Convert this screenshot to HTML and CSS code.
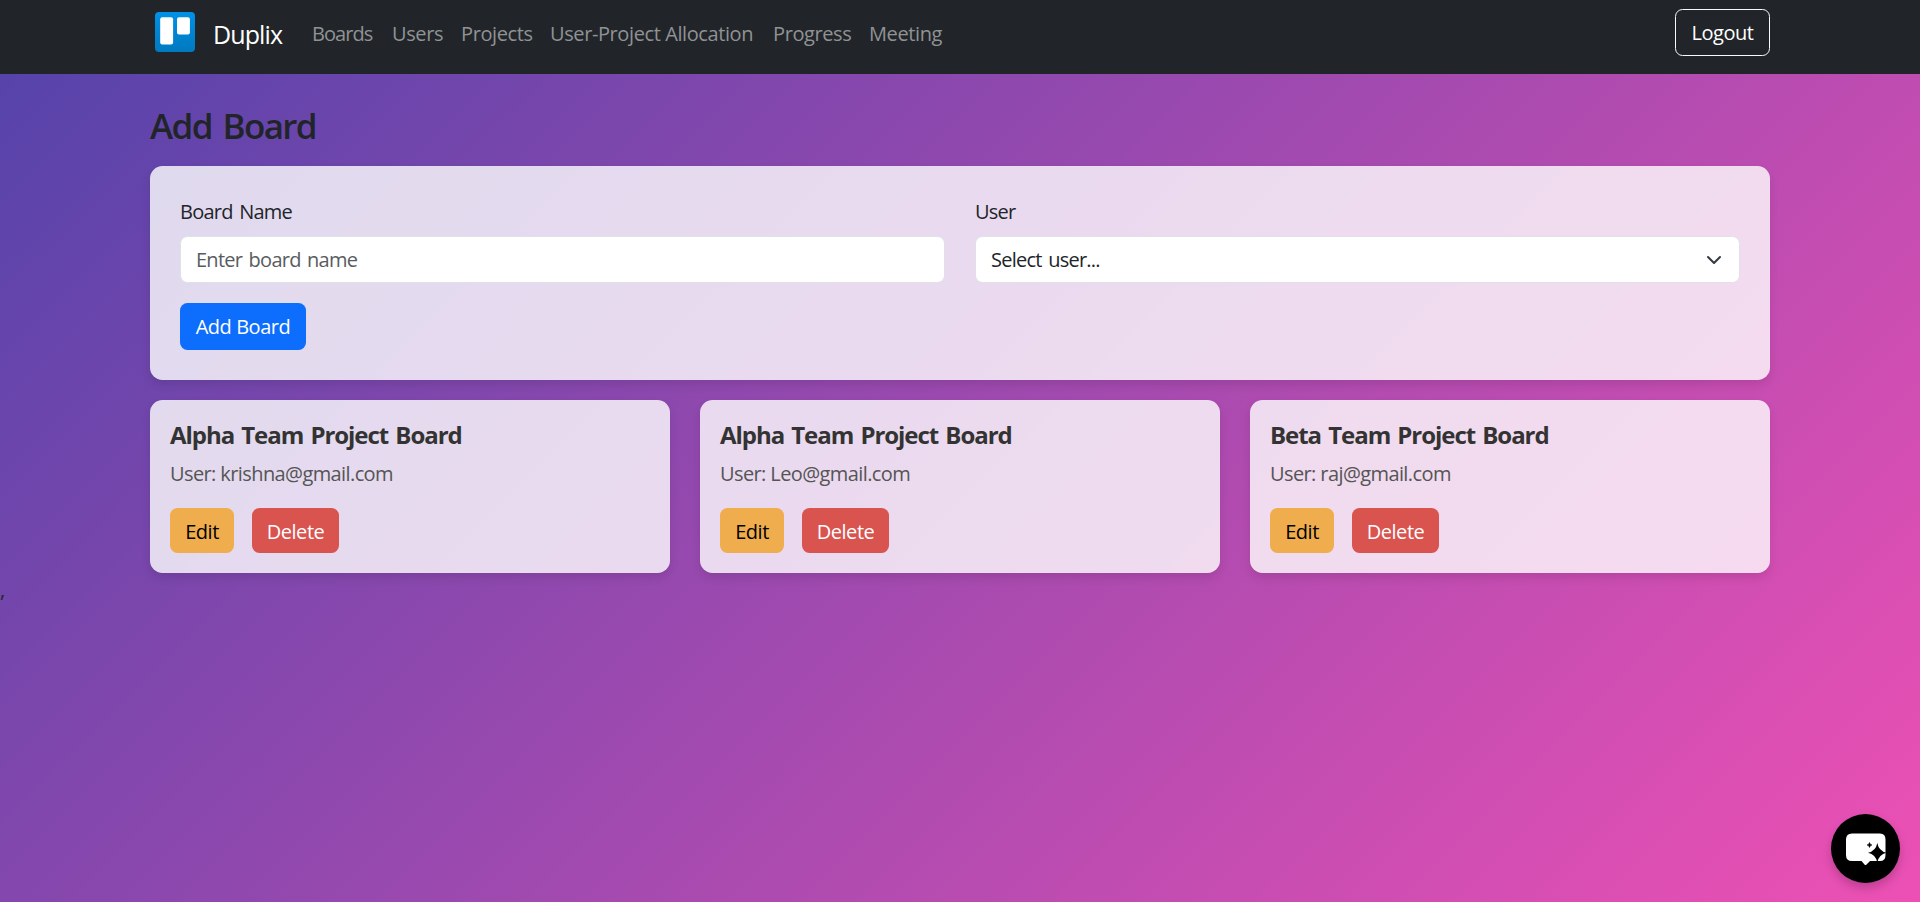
FILE: index.html
```html
<!DOCTYPE html>
<html lang="en">
<head>
<meta charset="utf-8">
<title>Duplix</title>
<link rel="stylesheet" href="styles.css">
</head>
<body>
<header class="navbar">
  <div class="container navbar-inner">
    <a class="brand">
      <svg class="logo" viewBox="0 0 40 40">
        <defs><linearGradient id="lg" x1="0" y1="0" x2="0" y2="1"><stop offset="0" stop-color="#0091e6"/><stop offset="1" stop-color="#0079bf"/></linearGradient></defs>
        <rect width="40" height="40" rx="4" fill="url(#lg)"/>
        <rect x="5.2" y="5.2" width="12.9" height="27.4" rx="2" fill="#fff"/>
        <rect x="22" y="5.2" width="12.9" height="17.4" rx="2" fill="#fff"/>
      </svg>
      <span class="brand-name">Duplix</span>
    </a>
    <nav class="links">
      <a class="link boards">Boards</a>
      <a class="link users">Users</a>
      <a class="link projects">Projects</a>
      <a class="link allocation">User-Project Allocation</a>
      <a class="link progress">Progress</a>
      <a class="link meeting">Meeting</a>
    </nav>
    <button class="btn logout">Logout</button>
  </div>
</header>
<main class="container">
  <h1 class="heading">Add Board</h1>
  <form class="card form">
    <div class="fields">
      <div class="field">
        <label class="label">Board Name</label>
        <div class="control placeholder">Enter board name</div>
      </div>
      <div class="field">
        <label class="label">User</label>
        <div class="control">
          <span>Select user...</span>
          <svg class="chevron" viewBox="0 0 16 16"><path d="m2 5 6 6 6-6" fill="none" stroke="#343a40" stroke-width="2" stroke-linecap="round" stroke-linejoin="round"/></svg>
        </div>
      </div>
    </div>
    <button type="button" class="btn primary">Add Board</button>
  </form>
  <section class="boards-grid">
    <article class="card board">
      <h2 class="title">Alpha Team Project Board</h2>
      <p class="owner">User: krishna@gmail.com</p>
      <div class="actions"><button class="btn edit">Edit</button><button class="btn delete">Delete</button></div>
    </article>
    <article class="card board">
      <h2 class="title">Alpha Team Project Board</h2>
      <p class="owner">User: Leo@gmail.com</p>
      <div class="actions"><button class="btn edit">Edit</button><button class="btn delete">Delete</button></div>
    </article>
    <article class="card board">
      <h2 class="title">Beta Team Project Board</h2>
      <p class="owner">User: raj@gmail.com</p>
      <div class="actions"><button class="btn edit">Edit</button><button class="btn delete">Delete</button></div>
    </article>
  </section>
</main>
<div class="stray">,</div>
<button class="chat" aria-label="Chat">
  <svg viewBox="0 0 69 69" width="69" height="69">
    <path d="M21 19.5H49Q54.500 19.500 54.500 25.500V41Q54.500 47 49 47H39L35.500 50.500Q34.500 51.500 33.500 50.500L30.500 47H21Q15 47 15 41V25.500Q15 19.500 21 19.500Z" fill="#fff"/>
    <path d="M46.300 29Q47.800 37 55.500 38.800Q47.800 40.600 46.300 48.500Q44.800 40.600 37 38.800Q44.800 37 46.300 29Z" fill="#000"/>
    <path d="M38.500 28.500Q38.900 30.600 41 31Q38.900 31.400 38.500 33.500Q38.100 31.400 36 31Q38.100 30.600 38.500 28.500Z" fill="#000" stroke="#000" stroke-width=".5"/>
  </svg>
</button>
</body>
</html>
```
FILE: styles.css
```css
* { box-sizing: border-box; }
body {
  margin: 0;
  height: 902px;
  overflow: hidden;
  background: linear-gradient(135deg, #5243aa, #ed50b4);
  font: 20px/30px "Open Sans", "Noto Sans", sans-serif;
  letter-spacing: -0.75px;
  word-spacing: 2px;
  color: #212529;
}
.container { width: 1620px; margin: 0 auto; }
.navbar { height: 74px; background: #212529; }
.navbar-inner { display: flex; align-items: flex-start; padding-top: 9px; }
.brand { display: flex; align-items: flex-start; padding-left: 5px; width: 152px; color: #fff; }
.logo { width: 40px; height: 40px; margin: 3px 18px 0 0; }
.brand-name { font-size: 25px; line-height: 50px; letter-spacing: -0.9px; }
.links { display: flex; flex: 1; color: #909294; }
.link { padding: 10px 0 8px 10px; white-space: nowrap; letter-spacing: -0.4px; word-spacing: 0; }
.boards { width: 80px; letter-spacing: -0.95px; }
.users { width: 69px; }
.projects { width: 89px; }
.allocation { width: 223px; }
.progress { width: 96px; }
.btn {
  display: block;
  height: 47px;
  padding: 1px 0 0;
  border: 0;
  border-radius: 7.5px;
  font: inherit;
  letter-spacing: -0.45px;
  word-spacing: 0;
  color: #fff;
  text-align: center;
}
.logout { width: 95px; border: 1px solid #f8f9fa; background: transparent; }
.heading { margin: 0; padding-top: 30px; height: 92px; font-size: 35px; line-height: 44px; font-weight: 600; letter-spacing: -1.6px; word-spacing: 3px; }
.card { background: rgba(255, 255, 255, 0.8); border-radius: 12.5px; box-shadow: 0 5px 10px rgba(0, 0, 0, 0.1); }
.form { height: 214px; padding: 31px 30px 30px; }
.fields { display: flex; gap: 30px; margin-bottom: 20px; }
.field { flex: 1; }
.label { display: block; margin-bottom: 9px; }
.control {
  display: flex;
  align-items: center;
  justify-content: space-between;
  height: 47px;
  padding: 0 15px;
  border: 1px solid #dee2e6;
  border-radius: 7.5px;
  background: #fff;
}
.placeholder { color: #595c5f; }
.chevron { width: 16px; height: 16px; margin-right: 2px; }
.primary { width: 126px; background: #0d6efd; }
.boards-grid { display: grid; grid-template-columns: repeat(3, 1fr); gap: 30px; margin-top: 20px; }
.board { height: 173px; padding: 20px; }
.title { margin: 0 0 9px; font-size: 24px; line-height: 30px; font-weight: 700; color: #333; letter-spacing: -1.05px; }
.owner { margin: 0 0 19px; color: #555; letter-spacing: -0.6px; word-spacing: 0; }
.actions { display: flex; gap: 18px; }
.actions .btn { height: 45px; padding-top: 2px; }
.edit { width: 64px; background: #f0ad4e; color: #000; }
.delete { width: 87px; background: #d9534f; }
.stray { margin-top: 2px; }
.chat {
  position: absolute;
  left: 1831px;
  top: 814px;
  width: 69px;
  height: 69px;
  padding: 0;
  border: 0;
  border-radius: 50%;
  background: #000;
  box-shadow: 0 5px 10px rgba(0, 0, 0, 0.2);
}
.chat svg { display: block; }
```
